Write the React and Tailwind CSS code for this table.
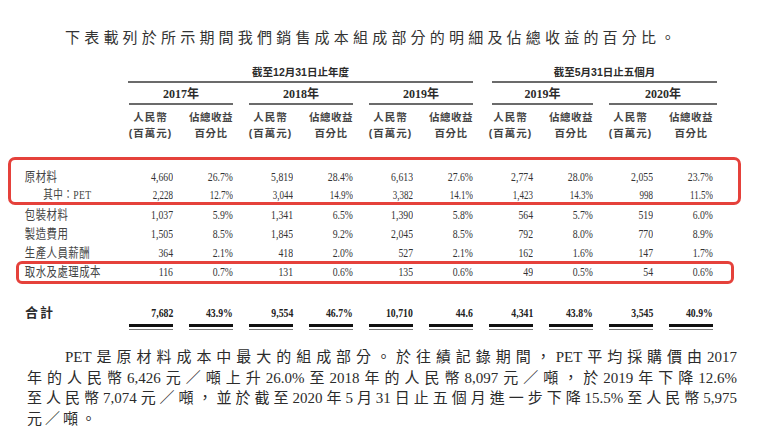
import React from "react";

const rows = [
  { label: "原材料", vals: ["4,660", "26.7%", "5,819", "28.4%", "6,613", "27.6%", "2,774", "28.0%", "2,055", "23.7%"] },
  { label: "其中：PET", sub: true, vals: ["2,228", "12.7%", "3,044", "14.9%", "3,382", "14.1%", "1,423", "14.3%", "998", "11.5%"] },
  { label: "包裝材料", vals: ["1,037", "5.9%", "1,341", "6.5%", "1,390", "5.8%", "564", "5.7%", "519", "6.0%"] },
  { label: "製造費用", vals: ["1,505", "8.5%", "1,845", "9.2%", "2,045", "8.5%", "792", "8.0%", "770", "8.9%"] },
  { label: "生產人員薪酬", vals: ["364", "2.1%", "418", "2.0%", "527", "2.1%", "162", "1.6%", "147", "1.7%"] },
  { label: "取水及處理成本", vals: ["116", "0.7%", "131", "0.6%", "135", "0.6%", "49", "0.5%", "54", "0.6%"] },
];

const totals = ["7,682", "43.9%", "9,554", "46.7%", "10,710", "44.6", "4,341", "43.8%", "3,545", "40.9%"];
const years = ["2017年", "2018年", "2019年", "2019年", "2020年"];

const serif = "font-['Liberation_Serif','Noto_Sans_CJK_TC',serif]";
const sans = "font-['Liberation_Sans','Noto_Sans_CJK_TC',sans-serif]";

const App = () => {
  return (
    <div className={`relative w-[767px] h-[426px] overflow-hidden bg-white text-[#2b2b2b] ${serif}`}>
      {/* title */}
      <div className="pt-[28px] pl-[65px] h-[61px]">
        <p className="text-[15px] leading-[20px] tracking-[4.2px] text-[#333]">
          下表載列於所示期間我們銷售成本組成部分的明細及佔總收益的百分比。
        </p>
      </div>

      <div className="grid grid-cols-[113px_repeat(10,60px)]">
        {/* group headers */}
        <div className="h-[22px]" />
        <div className={`col-span-6 ml-[15px] h-[22px] border-b-2 border-[#6b6b6b] text-center text-[10.5px] leading-[22px] font-bold ${sans}`}>
          截至12月31日止年度
        </div>
        <div className={`col-span-4 ml-[19px] mr-[-4px] h-[22px] border-b-2 border-[#6b6b6b] text-center text-[10.5px] leading-[22px] font-bold ${sans}`}>
          截至5月31日止五個月
        </div>

        {/* years */}
        <div className="h-[22px]" />
        {years.map((y, i) => (
          <div
            key={i}
            className={`col-span-2 h-[22px] border-b-2 border-[#6b6b6b] text-center text-[12px] leading-[22px] font-bold ${i === 3 ? "ml-[19px]" : "ml-[16px]"} ${i === 4 ? "mr-[-4px]" : ""}`}
          >
            {y}
          </div>
        ))}

        {/* column headers */}
        <div className="h-[62px]" />
        {years.map((y, i) => (
          <React.Fragment key={i}>
            <div className={`pt-[4px] pl-[15px] text-center text-[10.5px] leading-[16px] font-bold tracking-[1px] text-[#444] ${sans}`}>
              <div>人民幣</div>
              <div>(百萬元)</div>
            </div>
            <div className={`pt-[4px] pl-[16px] text-center text-[10.5px] leading-[16px] font-bold tracking-[0.5px] text-[#444] ${sans}`}>
              <div>佔總收益</div>
              <div>百分比</div>
            </div>
          </React.Fragment>
        ))}

        {/* body rows */}
        {rows.map((r, ri) => (
          <React.Fragment key={ri}>
            <div className="h-[19px] overflow-visible whitespace-nowrap leading-[19px] text-[#444]">
              <div
                className={`origin-left scale-x-[0.8] ${
                  r.sub ? "pl-[54px] text-[12px] tracking-[0.5px]" : "pl-[31px] text-[13px] tracking-[0.6px]"
                }`}
              >
                {r.label}
              </div>
            </div>
            {r.vals.map((v, vi) => (
              <div
                key={vi}
                className={`h-[19px] origin-right scale-x-75 text-right leading-[19px] text-[#333] ${r.sub ? "text-[12px]" : "text-[13px]"}`}
              >
                {v}
              </div>
            ))}
          </React.Fragment>
        ))}

        {/* total */}
        <div className={`mt-[22px] h-[20px] pl-[25px] text-[13px] leading-[20px] font-bold tracking-[2px] ${sans}`}>
          合計
        </div>
        {totals.map((v, i) => (
          <div key={i} className="mt-[22px] flex flex-col items-end">
            <div className="h-[20px] origin-right scale-x-75 text-right text-[13px] leading-[20px] font-bold text-[#222]">
              {v}
            </div>
            <div className="mt-[1px] h-[3px] w-[44px] bg-[#111]" />
            <div className="mt-[2px] h-px w-[44px] bg-[#777]" />
          </div>
        ))}
      </div>

      {/* paragraph */}
      <div className="mt-[17px] ml-[27px] w-[710px] text-[15px] leading-[20.5px] text-[#2b2b2b]">
        <div className="pl-[38px] text-justify [text-align-last:justify]">
          PET是原材料成本中最大的組成部分。於往績記錄期間，PET平均採購價由2017
        </div>
        <div className="text-justify [text-align-last:justify]">
          年的人民幣6,426元／噸上升26.0%至2018年的人民幣8,097元／噸，於2019年下降12.6%
        </div>
        <div className="text-justify [text-align-last:justify]">
          至人民幣7,074元／噸，並於截至2020年5月31日止五個月進一步下降15.5%至人民幣5,975
        </div>
        <div className="tracking-[3px]">元／噸。</div>
      </div>

      {/* red annotation boxes */}
      <div className="absolute left-[8px] top-[157px] h-[48px] w-[733px] rounded-[7px] border-[3px] border-[#e5413b]" />
      <div className="absolute left-[16px] top-[261px] h-[23px] w-[718px] rounded-[6px] border-[3px] border-[#e5413b]" />
    </div>
  );
};

export default App;
